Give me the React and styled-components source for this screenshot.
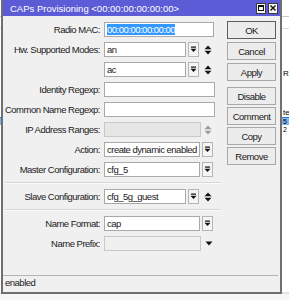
import React from 'react';
import styled, { createGlobalStyle } from 'styled-components';

const GlobalStyle = createGlobalStyle`
  html, body {
    margin: 0;
    padding: 0;
    background: #ffffff;
  }
  body {
    font-family: "Liberation Sans", Arial, sans-serif;
    overflow: hidden;
  }
`;

const Screen = styled.div`
  position: relative;
  width: 289px;
  height: 300px;
  overflow: hidden;
  background: #ffffff;
`;

// the WinBox list that sits behind the dialog
const Backdrop = styled.div`
  display: flex;
  flex-direction: column;
  height: 300px;
  font-size: 8px;
  color: #000;
`;

const BgHeader = styled.div`
  height: 16px;
  border-bottom: 1px solid #c9c9c9;
`;

const BgLine = styled.div`
  height: 11px;
  border-bottom: 1px solid #dadada;
`;

const BgText = styled.div`
  padding-left: 283px;
  height: ${({ $h }) => $h}px;
  line-height: ${({ $h }) => $h}px;
  margin-top: ${({ $top }) => $top || 0}px;
  white-space: nowrap;
`;

const BgRow = styled.div`
  height: 7px;
  line-height: 7px;
  font-size: 7px;
  padding-left: 283px;
  background: ${({ $sel }) => ($sel ? '#7fb5ec' : '#ffffff')};
  border-top: 1px solid ${({ $sel }) => ($sel ? '#2f7fd8' : 'transparent')};
  white-space: nowrap;
`;

const BgFooter = styled.div`
  margin-top: auto;
  height: 6px;
  border-top: 2px solid #e2e2e2;
  background: #f6f6f6;
`;

const Window = styled.div`
  position: absolute;
  left: 1px;
  top: 0;
  width: 281px;
  height: 294px;
  box-sizing: border-box;
  border: 2px solid #6f6f6f;
  border-top: none;
  background: #f0f0f0;
  display: flex;
  flex-direction: column;
  font-size: 9.5px;
  letter-spacing: -0.5px;
  color: #1a1a1a;
`;

const TitleBar = styled.div`
  height: 16px;
  flex-shrink: 0;
  background: #5c5cd6;
  display: flex;
  align-items: center;
  padding: 0 2px 0 7px;
  color: #ffffff;
  font-size: 9.5px;
  letter-spacing: 0;
`;

const TitleText = styled.span`
  flex: 1;
  white-space: nowrap;
`;

const TitleButton = styled.div`
  width: 10px;
  height: 11px;
  box-sizing: border-box;
  margin-left: 2px;
  background: #f4f4f4;
  border: 1px solid #3a3a3a;
  display: flex;
  align-items: center;
  justify-content: center;
`;

const Body = styled.div`
  display: flex;
  flex: 1;
`;

const Form = styled.div`
  width: 218px;
  padding-top: 6px;
  display: flex;
  flex-direction: column;
  gap: 5px;
`;

const Row = styled.div`
  display: flex;
  align-items: center;
  height: 15px;
`;

const Label = styled.div`
  width: 97px;
  text-align: right;
  margin-right: 4px;
  white-space: nowrap;
`;

const Field = styled.div`
  width: ${({ $w }) => $w}px;
  height: 15px;
  box-sizing: border-box;
  border: 1px solid ${({ $off }) => ($off ? '#c8c8c8' : '#a9a9a9')};
  background: ${({ $off }) => ($off ? ($off === 'flat' ? '#f0f0f0' : '#e6e6e6') : '#ffffff')};
  padding: 0 2px;
  line-height: 13px;
  white-space: nowrap;
  overflow: hidden;
`;

const Selected = styled.span`
  background: #3399ff;
  color: #ffffff;
`;

const DropButton = styled.div`
  width: 11px;
  height: 15px;
  box-sizing: border-box;
  margin-left: 2px;
  border: 1px solid #b4b4b4;
  background: #f5f5f5;
  display: flex;
  align-items: center;
  justify-content: center;
`;

const Spinner = styled.div`
  margin-left: ${({ $gap }) => $gap}px;
  display: flex;
  align-items: center;
`;

const Divider = styled.div`
  height: 1px;
  margin: 0 0 0 2px;
  background: #d6d6d6;
  border-bottom: 1px solid #fbfbfb;
`;

const ButtonColumn = styled.div`
  margin-left: 6px;
  padding-top: 5px;
  display: flex;
  flex-direction: column;
`;

const ButtonGroup = styled.div`
  display: flex;
  flex-direction: column;
  gap: ${({ $gap }) => $gap}px;
  margin-top: ${({ $top }) => $top || 0}px;
`;

const Button = styled.div`
  width: 49px;
  height: 18px;
  box-sizing: border-box;
  border: 1px solid ${({ $primary }) => ($primary ? '#5e5e5e' : '#a8a8a8')};
  background: #ececec;
  display: flex;
  align-items: center;
  justify-content: center;
  color: #1a1a1a;
`;

const StatusBar = styled.div`
  margin: auto 2px 0 0;
  height: 16px;
  border-top: 1px solid #b4b4b4;
  padding-left: 2px;
  line-height: 14px;
`;

const DropIcon = () => (
  <svg width="7" height="7" viewBox="0 0 7 7">
    <rect x="1" y="0.5" width="5" height="1.2" fill="#111" />
    <polygon points="0.5,2.8 6.5,2.8 3.5,6" fill="#111" />
  </svg>
);

const ArrowDown = () => (
  <svg width="8" height="5" viewBox="0 0 8 5">
    <polygon points="0.5,0.5 7.5,0.5 4,4.5" fill="#111" />
  </svg>
);

const UpDown = ({ color = '#111' }) => (
  <svg width="8" height="10" viewBox="0 0 8 10">
    <polygon points="0.5,4.2 7.5,4.2 4,0.5" fill={color} />
    <polygon points="0.5,5.8 7.5,5.8 4,9.5" fill={color} />
  </svg>
);

const MaxIcon = () => (
  <svg width="6" height="6" viewBox="0 0 6 6">
    <rect x="0.5" y="0.5" width="5" height="5" fill="none" stroke="#111" strokeWidth="1" />
    <rect x="0.5" y="0.5" width="5" height="1.5" fill="#111" />
  </svg>
);

const CloseIcon = () => (
  <svg width="6" height="6" viewBox="0 0 6 6">
    <path d="M0.5 0.5 L5.5 5.5 M5.5 0.5 L0.5 5.5" stroke="#111" strokeWidth="1.4" />
  </svg>
);

function SelectRow({ label, value, spinner }) {
  return (
    <Row>
      <Label>{label}</Label>
      <Field $w={spinner ? 82 : 96}>{value}</Field>
      <DropButton>
        <DropIcon />
      </DropButton>
      {spinner && (
        <Spinner $gap={5}>
          <UpDown />
        </Spinner>
      )}
    </Row>
  );
}

export default function App() {
  return (
    <Screen>
      <GlobalStyle />
      <Backdrop>
        <BgHeader />
        <BgLine />
        <BgText $top={40} $h={10}>R</BgText>
        <BgText $top={30} $h={8}>te</BgText>
        <BgRow $sel>5</BgRow>
        <BgRow>2</BgRow>
        <BgFooter />
      </Backdrop>

      <Window>
        <TitleBar>
          <TitleText>CAPs Provisioning &lt;00:00:00:00:00:00&gt;</TitleText>
          <TitleButton>
            <MaxIcon />
          </TitleButton>
          <TitleButton>
            <CloseIcon />
          </TitleButton>
        </TitleBar>

        <Body>
          <Form>
            <Row>
              <Label>Radio MAC:</Label>
              <Field $w={110}>
                <Selected>00:00:00:00:00:00</Selected>
              </Field>
            </Row>
            <SelectRow label="Hw. Supported Modes:" value="an" spinner />
            <SelectRow label="" value="ac" spinner />
            <Row>
              <Label>Identity Regexp:</Label>
              <Field $w={111} />
            </Row>
            <Row>
              <Label>Common Name Regexp:</Label>
              <Field $w={111} />
            </Row>
            <Row>
              <Label>IP Address Ranges:</Label>
              <Field $w={97} $off="gray" />
              <Spinner $gap={3}>
                <UpDown color="#9a9a9a" />
              </Spinner>
            </Row>
            <SelectRow label="Action:" value="create dynamic enabled" />
            <SelectRow label="Master Configuration:" value="cfg_5" />
            <Divider />
            <SelectRow label="Slave Configuration:" value="cfg_5g_guest" spinner />
            <Divider />
            <SelectRow label="Name Format:" value="cap" />
            <Row>
              <Label>Name Prefix:</Label>
              <Field $w={97} $off="flat" />
              <Spinner $gap={4}>
                <ArrowDown />
              </Spinner>
            </Row>
          </Form>

          <ButtonColumn>
            <ButtonGroup $gap={3}>
              <Button $primary>OK</Button>
              <Button>Cancel</Button>
              <Button>Apply</Button>
            </ButtonGroup>
            <ButtonGroup $gap={2} $top={6}>
              <Button>Disable</Button>
              <Button>Comment</Button>
              <Button>Copy</Button>
              <Button>Remove</Button>
            </ButtonGroup>
          </ButtonColumn>
        </Body>

        <StatusBar>enabled</StatusBar>
      </Window>
    </Screen>
  );
}
